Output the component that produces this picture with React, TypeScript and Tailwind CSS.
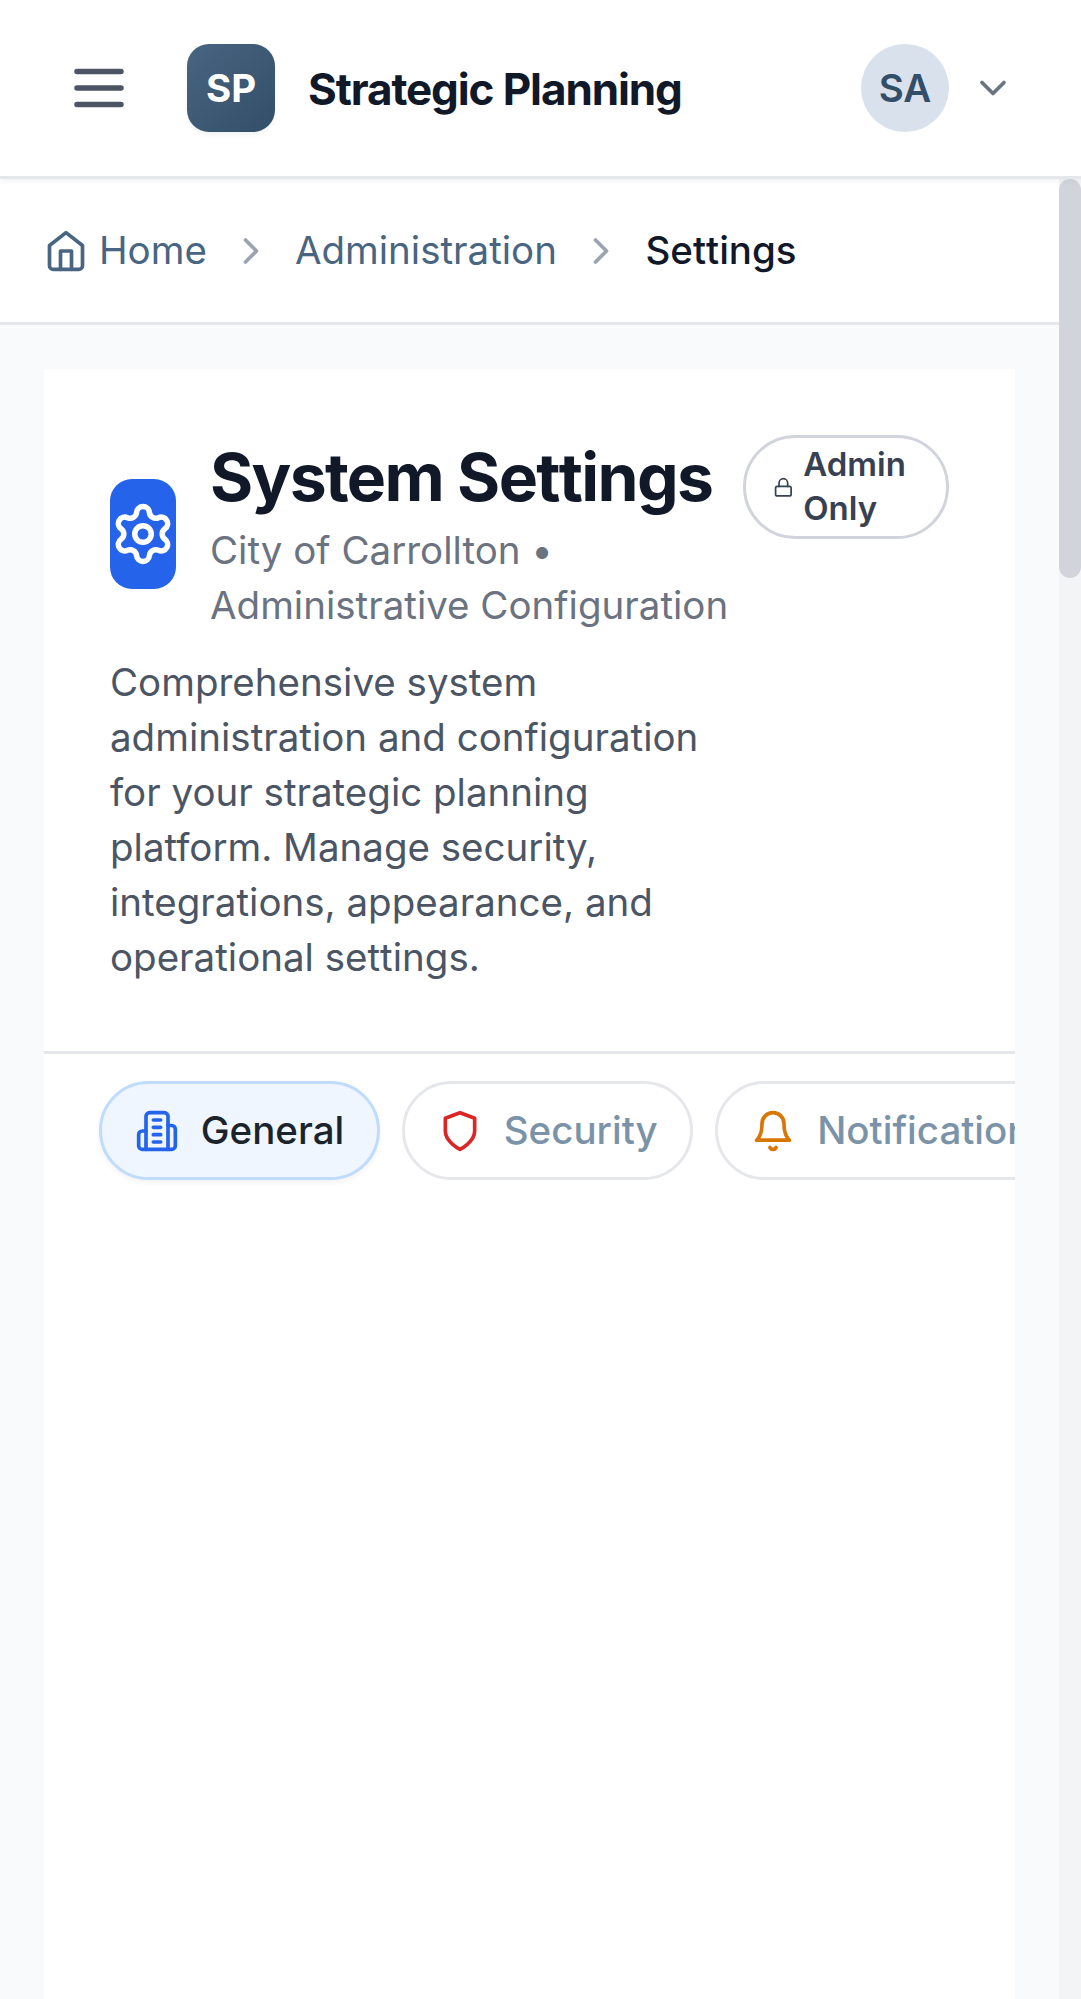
import type { ReactNode } from "react";
import { Settings } from "lucide-react";

function Icon({ className, children }: { className: string; children: ReactNode }) {
  return (
    <svg viewBox="0 0 24 24" fill="none" stroke="currentColor" strokeWidth="2" strokeLinecap="round" strokeLinejoin="round" className={className}>
      {children}
    </svg>
  );
}

function ChevronRight() {
  return (
    <Icon className="size-[44px] shrink-0 text-[#9ca3af]">
      <path d="m9 18 6-6-6-6" />
    </Icon>
  );
}

/* A double t without the tight kerning pair, so that the crossbars stay apart. */
function DoubleT() {
  return <span className="[font-kerning:none]">tt</span>;
}

function Header() {
  return (
    <header className="relative z-10 flex h-[179px] shrink-0 items-center border-b-3 border-[#e5e7eb] bg-white px-[66px] shadow-[0_2.75px_5.5px_0_rgba(0,0,0,0.05)]">
      <Icon className="size-[66px] shrink-0 text-[#4b5563]">
        <path d="M4 6h16M4 12h16M4 18h16" />
      </Icon>
      <div className="ml-[55px] flex size-[88px] shrink-0 items-center justify-center rounded-[22px] bg-linear-to-br from-[#486581] to-[#334e68] pt-[2px] text-[38.5px] font-bold text-white shadow-[0_2.75px_5.5px_0_rgba(0,0,0,0.05)]">
        SP
      </div>
      <h1 className="ml-[33px] pt-[2px] text-[44px] leading-[66px] font-bold tracking-[-0.025em] whitespace-nowrap text-[#111827]">Strategic Planning</h1>
      <div className="ml-auto flex items-center gap-[22px]">
        <div className="flex size-[88px] items-center justify-center rounded-full bg-[#d9e2ec] pt-[2px] text-[38.5px] font-semibold text-[#334e68]">SA</div>
        <Icon className="size-[44px] text-[#6b7280]">
          <path d="m6 9 6 6 6-6" />
        </Icon>
      </div>
    </header>
  );
}

function Breadcrumb() {
  return (
    <nav className="flex h-[146px] items-center gap-[22px] border-b-3 border-[#e5e7eb] bg-white px-[44px] text-[38.5px] leading-[55px] text-[#486581]">
      <span className="flex items-center gap-[11px]">
        <Icon className="size-[44px] shrink-0">
          <path d="m3 9 9-7 9 7v11a2 2 0 0 1-2 2H5a2 2 0 0 1-2-2z" />
          <path d="M9 22V12h6v10" />
        </Icon>
        Home
      </span>
      <ChevronRight />
      <span className="pr-[0.5px]">Administration</span>
      <ChevronRight />
      <span className="font-medium text-[#111827]">Se<DoubleT />ings</span>
    </nav>
  );
}

function Tab({ label, active, iconColor, children }: { label: string; active?: boolean; iconColor: string; children: ReactNode }) {
  return (
    <button
      className={
        "flex h-[99px] shrink-0 items-center gap-[22px] rounded-full border-3 px-[32.75px] text-[38.5px] leading-[55px] font-medium " +
        (active
          ? "border-[#bfdbfe] bg-[#eff6ff] text-[#1b242c] shadow-[0_2.75px_5.5px_0_rgba(0,0,0,0.05)]"
          : "border-[#e5e7eb] bg-white text-[#7b93a8]")
      }
    >
      <Icon className={"size-[44px] shrink-0 " + iconColor}>{children}</Icon>
      {label}
    </button>
  );
}

export default function App() {
  return (
    <div className="flex h-[1999px] w-[1081px] flex-col overflow-hidden bg-[#f9fafb] font-['Inter',sans-serif] text-[#111827] antialiased">
      <Header />
      <div className="flex min-h-0 flex-1">
        <main className="flex min-w-0 flex-1 flex-col">
          <Breadcrumb />
          <section className="mx-[44px] mt-[44px] flex-1 overflow-hidden bg-white">
            <div className="flex items-start border-b-3 border-[#e5e7eb] p-[66px]">
              <div className="w-[610px] shrink-0">
                <div className="flex items-center gap-[34px]">
                  <div className="flex h-[110px] w-[66px] shrink-0 items-center justify-center rounded-[22px] bg-[#2563eb]">
                    <Settings className="size-[66px] text-white" />
                  </div>
                  <div>
                    <h2 className="pb-[4px] text-[66px] leading-[84px] font-bold tracking-[-0.025em] whitespace-nowrap">System Se<DoubleT />ings</h2>
                    <p className="text-[38.5px] leading-[55px] whitespace-nowrap text-[#6b7280]">
                      City of Carrollton •<br />Administrative Configuration
                    </p>
                  </div>
                </div>
                <p className="mt-[22px] text-[38.5px] leading-[55px] text-[#4b5563]">
                  Comprehensive system<br />administration and configuration<br />for your strategic planning<br />platform. Manage security,<br />integrations, appearance, and<br />operational se<DoubleT />ings.
                </p>
              </div>
              <div className="ml-[23px] flex h-[104px] w-[206px] shrink-0 items-center gap-[10px] rounded-full border-3 border-[#d1d5db] px-[26.5px] text-[33px] leading-[44px] font-semibold text-[#374151]">
                <Icon className="size-[20.7px] shrink-0">
                  <rect width="18" height="11" x="3" y="11" rx="2" />
                  <path d="M7 11V7a5 5 0 0 1 10 0v4" />
                </Icon>
                <span className="pb-[2px]">Admin Only</span>
              </div>
            </div>
            <div className="flex gap-[22px] overflow-hidden px-[55px] py-[27px]">
              <Tab label="General" active iconColor="text-[#2563eb]">
                <path d="M6 22V4a2 2 0 0 1 2-2h8a2 2 0 0 1 2 2v18Z" />
                <path d="M6 12H4a2 2 0 0 0-2 2v6a2 2 0 0 0 2 2h2" />
                <path d="M18 9h2a2 2 0 0 1 2 2v9a2 2 0 0 1-2 2h-2" />
                <path d="M10 6h4M10 10h4M10 14h4M10 18h4" />
              </Tab>
              <Tab label="Security" iconColor="text-[#dc2626]">
                <path d="M12 22s8-4 8-10V5l-8-3-8 3v7c0 6 8 10 8 10" />
              </Tab>
              <Tab label="Notifications" iconColor="text-[#d97706]">
                <path d="M6 8a6 6 0 0 1 12 0c0 7 3 9 3 9H3s3-2 3-9" />
                <path d="M10.3 21a1.94 1.94 0 0 0 3.4 0" />
              </Tab>
            </div>
          </section>
        </main>
        <div className="w-[22px] shrink-0 bg-[#f3f4f6]">
          <div className="h-[399px] rounded-full bg-[#d1d5db]" />
        </div>
      </div>
    </div>
  );
}
